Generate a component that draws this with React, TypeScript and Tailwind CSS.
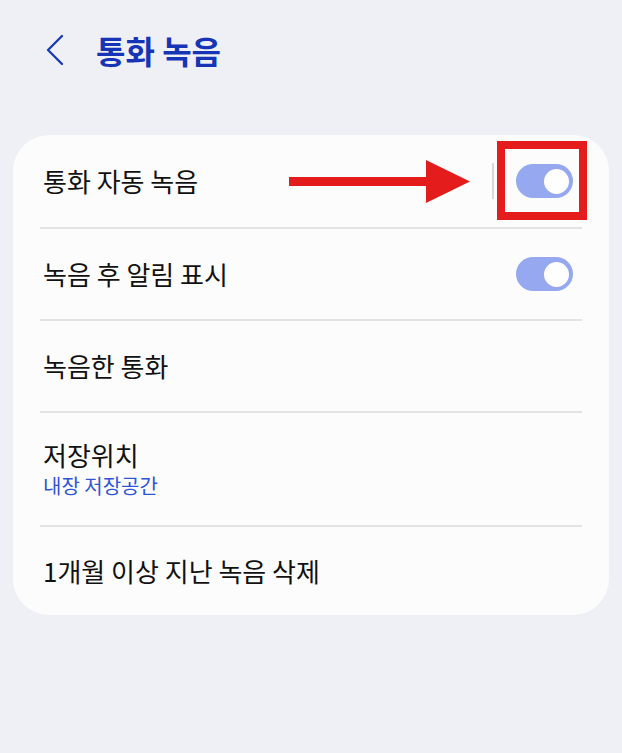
import React from "react"

const font = { fontFamily: '"Noto Sans CJK KR", "Noto Sans", sans-serif' }

function Toggle() {
  return (
    <div className="flex h-[34px] w-[57px] items-center justify-end rounded-full bg-[#95a8f0] pr-[2px]">
      <div className="h-[29px] w-[29px] rounded-full border-[2.5px] border-[#95a8f0] bg-white" />
    </div>
  )
}

function Divider() {
  return <div className="mx-[27px] h-[2px] bg-[#e3e3e6]" />
}

export default function App() {
  return (
    <div className="relative h-[753px] w-[622px] bg-[#eff0f5]" style={font}>
      {/* header */}
      <div className="flex h-[135px] items-start pt-[30px]">
        <div className="flex h-[40px] items-center pl-[45px]">
          <svg width="20" height="32" viewBox="0 0 20 32" fill="none">
            <polyline points="17,2 3,16 17,30" stroke="#1d3bb8" strokeWidth="2.4" strokeLinecap="round" strokeLinejoin="round" />
          </svg>
        </div>
        <h1 className="ml-[31px] text-[32px] font-bold leading-[40px] text-[#1634b6]">통화 녹음</h1>
      </div>

      {/* card */}
      <div className="mx-[13px] rounded-[36px] bg-[#fcfcfc] text-[#111]">
        <div className="flex h-[92px] items-center justify-between pl-[30px] pr-[36px]">
          <span className="text-[26px] leading-[32px]">통화 자동 녹음</span>
          <div className="flex items-center gap-[22px]">
            <div className="h-[36px] w-[2px] bg-[#d8d8d8]" />
            <Toggle />
          </div>
        </div>
        <Divider />
        <div className="flex h-[90px] items-center justify-between pl-[30px] pr-[36px]">
          <span className="text-[26px] leading-[32px]">녹음 후 알림 표시</span>
          <Toggle />
        </div>
        <Divider />
        <div className="flex h-[90px] items-center pl-[30px]">
          <span className="text-[26px] leading-[32px]">녹음한 통화</span>
        </div>
        <Divider />
        <div className="flex h-[112px] flex-col justify-center pl-[30px]">
          <span className="text-[26px] leading-[32px]">저장위치</span>
          <span className="mt-[2px] text-[20px] leading-[26px] text-[#2e55d6]">내장 저장공간</span>
        </div>
        <Divider />
        <div className="flex h-[88px] items-center pl-[30px]">
          <span className="text-[26px] leading-[32px]">1개월 이상 지난 녹음 삭제</span>
        </div>
      </div>

      {/* annotation */}
      <div className="absolute left-[497px] top-[141px] h-[79px] w-[90px] border-[8px] border-[#e41c1c]" />
      <div className="absolute left-[289px] top-[177px] h-[9px] w-[140px] bg-[#e41c1c]" />
      <svg className="absolute left-[426px] top-[160px]" width="44" height="44" viewBox="0 0 44 44">
        <polygon points="0,0 44,21.5 0,43" fill="#e41c1c" />
      </svg>
    </div>
  )
}
